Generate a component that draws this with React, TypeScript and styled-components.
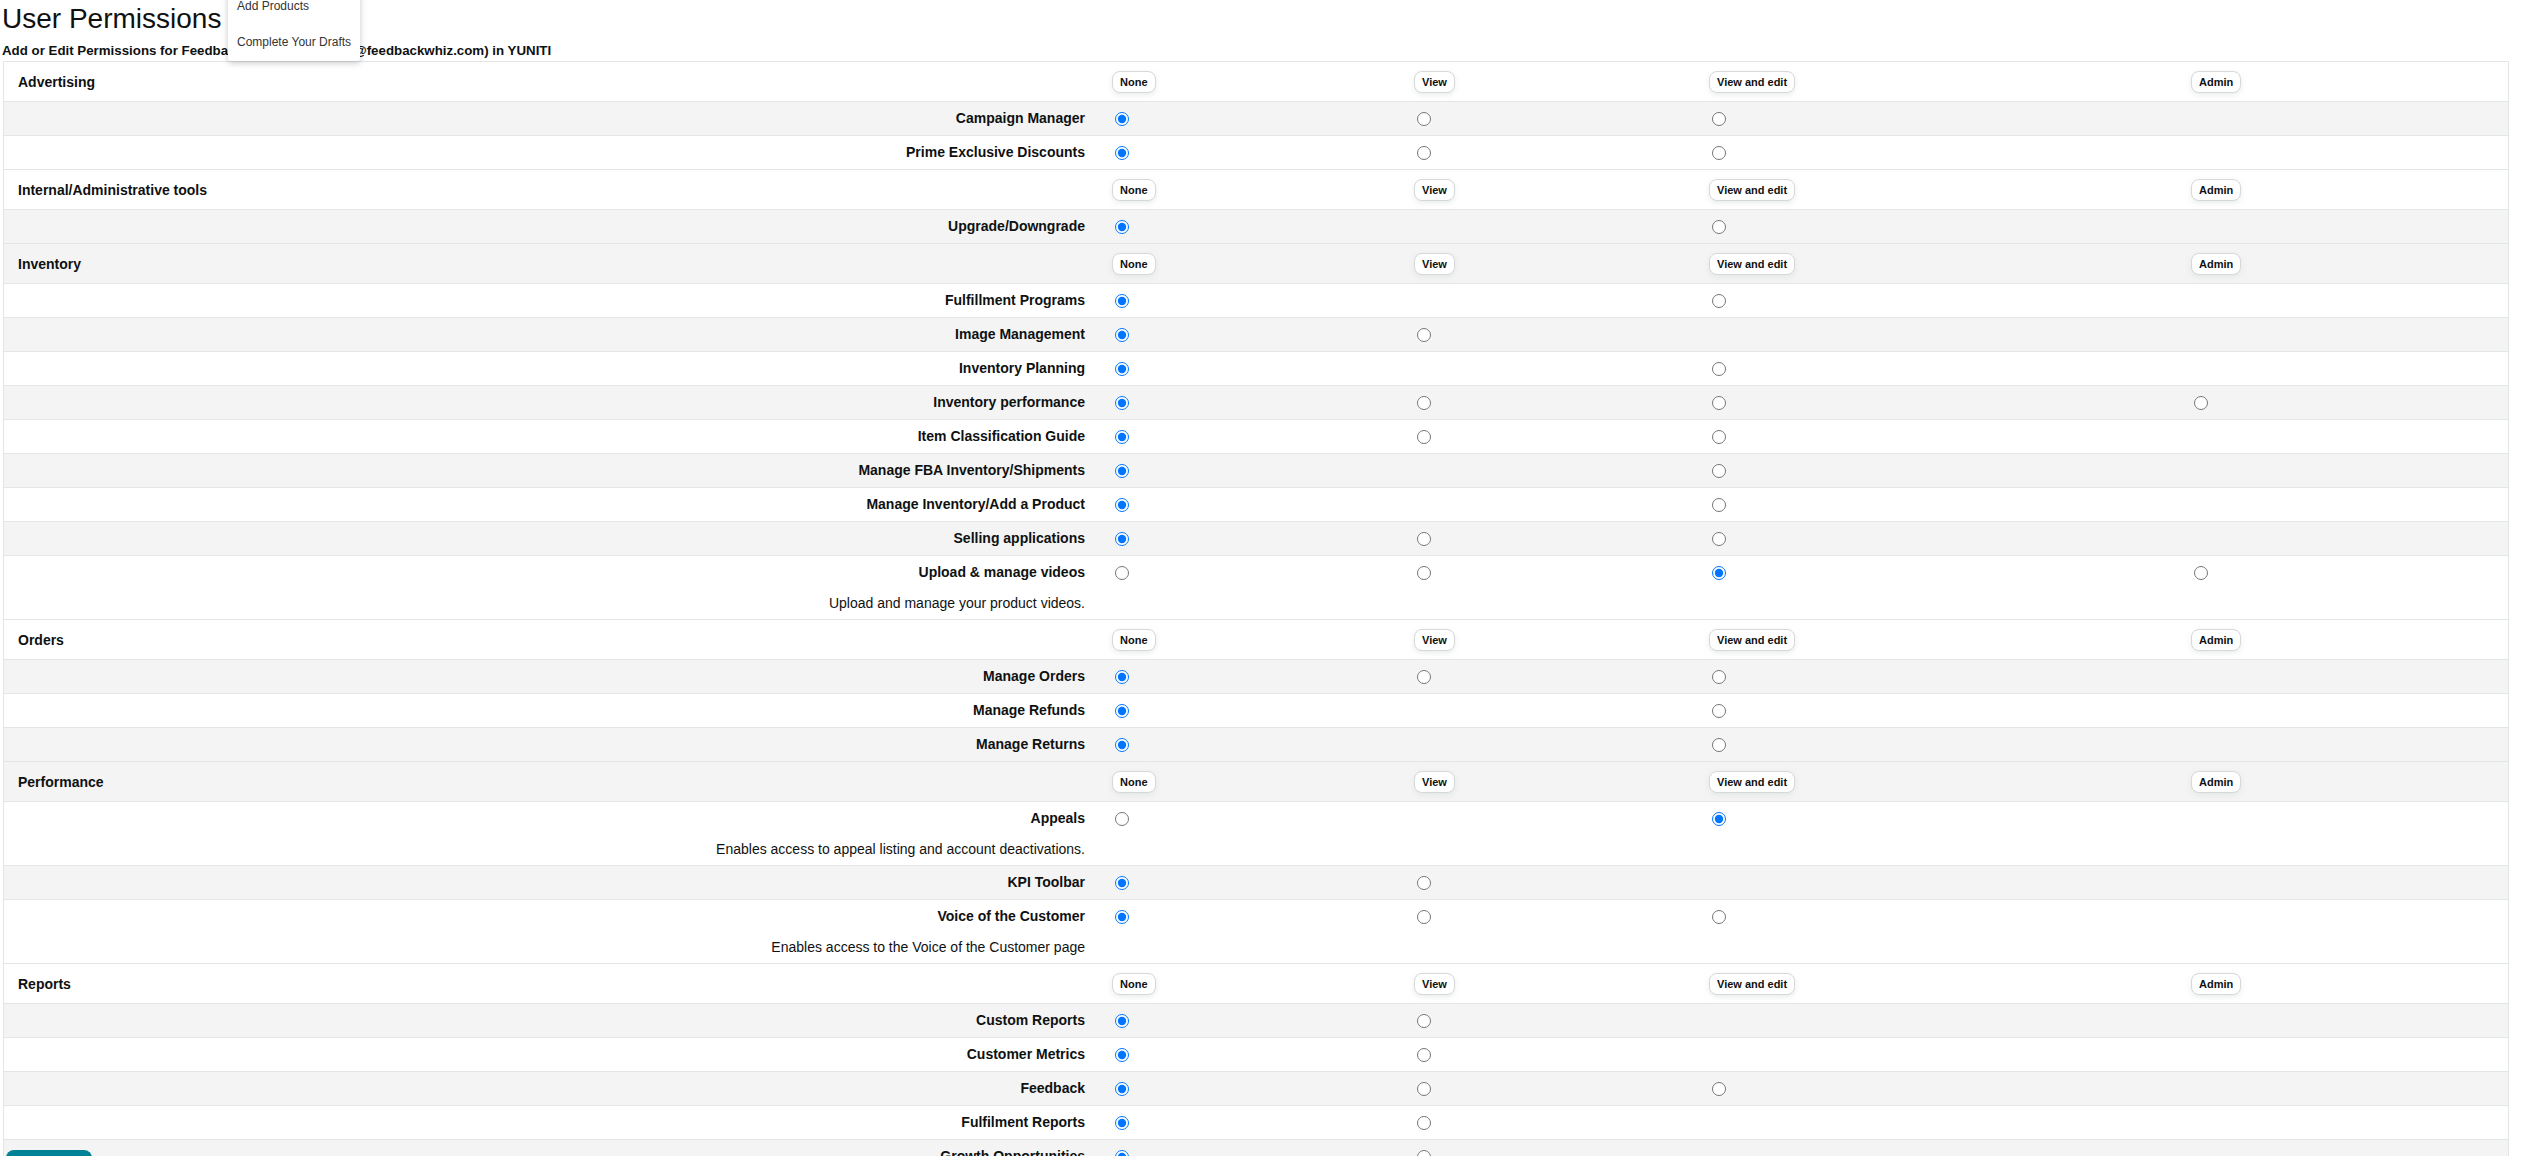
import React from "react";
import styled, { createGlobalStyle } from "styled-components";

const GlobalStyle = createGlobalStyle`
  html, body {
    margin: 0;
    padding: 0;
    overflow: hidden;
    background: #ffffff;
  }
  body {
    font-family: "Liberation Sans", Arial, sans-serif;
    color: #0f1111;
  }
`;

type Level = "none" | "view" | "edit" | "admin";
type Perm = { label: string; options: Level[]; checked: Level; desc?: string };
type Section = { title: string; perms: Perm[] };

const LEVELS: Level[] = ["none", "view", "edit", "admin"];
const LEVEL_LABELS: Record<Level, string> = {
  none: "None",
  view: "View",
  edit: "View and edit",
  admin: "Admin",
};

const NVE: Level[] = ["none", "view", "edit"];
const NE: Level[] = ["none", "edit"];
const NV: Level[] = ["none", "view"];
const ALL: Level[] = ["none", "view", "edit", "admin"];

const sections: Section[] = [
  {
    title: "Advertising",
    perms: [
      { label: "Campaign Manager", options: NVE, checked: "none" },
      { label: "Prime Exclusive Discounts", options: NVE, checked: "none" },
    ],
  },
  {
    title: "Internal/Administrative tools",
    perms: [{ label: "Upgrade/Downgrade", options: NE, checked: "none" }],
  },
  {
    title: "Inventory",
    perms: [
      { label: "Fulfillment Programs", options: NE, checked: "none" },
      { label: "Image Management", options: NV, checked: "none" },
      { label: "Inventory Planning", options: NE, checked: "none" },
      { label: "Inventory performance", options: ALL, checked: "none" },
      { label: "Item Classification Guide", options: NVE, checked: "none" },
      { label: "Manage FBA Inventory/Shipments", options: NE, checked: "none" },
      { label: "Manage Inventory/Add a Product", options: NE, checked: "none" },
      { label: "Selling applications", options: NVE, checked: "none" },
      {
        label: "Upload & manage videos",
        options: ALL,
        checked: "edit",
        desc: "Upload and manage your product videos.",
      },
    ],
  },
  {
    title: "Orders",
    perms: [
      { label: "Manage Orders", options: NVE, checked: "none" },
      { label: "Manage Refunds", options: NE, checked: "none" },
      { label: "Manage Returns", options: NE, checked: "none" },
    ],
  },
  {
    title: "Performance",
    perms: [
      {
        label: "Appeals",
        options: NE,
        checked: "edit",
        desc: "Enables access to appeal listing and account deactivations.",
      },
      { label: "KPI Toolbar", options: NV, checked: "none" },
      {
        label: "Voice of the Customer",
        options: NVE,
        checked: "none",
        desc: "Enables access to the Voice of the Customer page",
      },
    ],
  },
  {
    title: "Reports",
    perms: [
      { label: "Custom Reports", options: NV, checked: "none" },
      { label: "Customer Metrics", options: NV, checked: "none" },
      { label: "Feedback", options: NVE, checked: "none" },
      { label: "Fulfilment Reports", options: NV, checked: "none" },
      { label: "Growth Opportunities", options: NV, checked: "none" },
    ],
  },
];

const Page = styled.div`
  position: relative;
  padding: 3px 0 0 2px;
  min-height: 1156px;
`;

const Title = styled.h1`
  margin: 0;
  font-size: 28px;
  line-height: 32px;
  font-weight: 400;
  color: #0f1111;
`;

const Subtitle = styled.h2`
  margin: 8px 0 2px 0;
  font-size: 13.3px;
  line-height: 16px;
  font-weight: 700;
  color: #0f1111;
  white-space: nowrap;
`;

const Table = styled.div`
  margin-left: 1px;
  width: 2506px;
  box-sizing: border-box;
  border: 1px solid #e3e6e6;
  border-bottom: none;
`;

const Row = styled.div<{ $shaded: boolean }>`
  display: grid;
  grid-template-columns: 1096px 302px 295px 482px 1fr;
  background: ${(p) => (p.$shaded ? "#f4f4f4" : "#ffffff")};
  border-bottom: 1px solid #e3e6e6;
`;

const SectionName = styled.div`
  height: 39px;
  display: flex;
  align-items: center;
  padding-left: 14px;
  font-size: 14px;
  font-weight: 700;
`;

const HeaderCell = styled.div`
  height: 39px;
  display: flex;
  align-items: center;
  padding-left: 12px;
`;

const LevelButton = styled.button`
  height: 22px;
  padding: 0 7px;
  margin: 0;
  background: #ffffff;
  border: 1px solid #d5d9d9;
  border-radius: 8px;
  box-shadow: 0 2px 5px 0 rgba(213, 217, 217, 0.5);
  font-family: "Liberation Sans", Arial, sans-serif;
  font-size: 11px;
  font-weight: 700;
  color: #0f1111;
  cursor: pointer;
`;

const LabelCell = styled.div<{ $withDesc: boolean }>`
  display: flex;
  flex-direction: column;
  align-items: flex-end;
  padding-right: 15px;
  padding-bottom: ${(p) => (p.$withDesc ? "2px" : "0")};
`;

const PermLabel = styled.div`
  height: 33px;
  line-height: 33px;
  font-size: 14px;
  font-weight: 700;
  white-space: nowrap;
`;

const PermDesc = styled.div`
  line-height: 28px;
  font-size: 14px;
  font-weight: 400;
  white-space: nowrap;
`;

const RadioCell = styled.div`
  height: 33px;
  display: flex;
  align-items: center;
  padding-left: 15px;
`;

const Radio = styled.input`
  width: 14px;
  height: 14px;
  margin: 0;
`;

const Menu = styled.div`
  position: absolute;
  left: 228px;
  top: -12px;
  width: 132px;
  padding-bottom: 1px;
  background: #ffffff;
  box-shadow: 0 2px 6px rgba(0, 0, 0, 0.22);
  border-radius: 0 0 3px 3px;
  z-index: 10;
`;

const MenuItem = styled.div`
  height: 36px;
  line-height: 36px;
  padding-left: 9px;
  font-family: "Liberation Sans", Arial, sans-serif;
  font-size: 12px;
  color: #333333;
  white-space: nowrap;
`;

const SaveButton = styled.button`
  position: absolute;
  left: 6px;
  top: 1150px;
  width: 86px;
  height: 32px;
  border: none;
  border-radius: 8px;
  background: #008296;
  z-index: 5;
`;

type RowEntry =
  | { kind: "header"; title: string; shaded: boolean }
  | { kind: "perm"; perm: Perm; shaded: boolean; id: string };

function buildRows(): RowEntry[] {
  const rows: RowEntry[] = [];
  let dataIndex = 0;
  let lastShaded = false;
  sections.forEach((s, si) => {
    rows.push({ kind: "header", title: s.title, shaded: lastShaded });
    s.perms.forEach((p, pi) => {
      dataIndex += 1;
      const shaded = dataIndex % 2 === 1;
      lastShaded = shaded;
      rows.push({ kind: "perm", perm: p, shaded, id: `perm-${si}-${pi}` });
    });
  });
  return rows;
}

export default function App() {
  const rows = buildRows();
  return (
    <>
      <GlobalStyle />
      <Page>
        <Title>User Permissions</Title>
        <Subtitle>
          Add or Edit Permissions for FeedbackWhiz (amazonacc@feedbackwhiz.com) in YUNITI
        </Subtitle>
        <Table>
          {rows.map((r, i) =>
            r.kind === "header" ? (
              <Row key={i} $shaded={r.shaded}>
                <SectionName>{r.title}</SectionName>
                {LEVELS.map((l) => (
                  <HeaderCell key={l}>
                    <LevelButton type="button">{LEVEL_LABELS[l]}</LevelButton>
                  </HeaderCell>
                ))}
              </Row>
            ) : (
              <Row key={i} $shaded={r.shaded}>
                <LabelCell $withDesc={!!r.perm.desc}>
                  <PermLabel>{r.perm.label}</PermLabel>
                  {r.perm.desc && <PermDesc>{r.perm.desc}</PermDesc>}
                </LabelCell>
                {LEVELS.map((l) => (
                  <RadioCell key={l}>
                    {r.perm.options.includes(l) && (
                      <Radio
                        type="radio"
                        name={r.id}
                        value={l}
                        defaultChecked={r.perm.checked === l}
                      />
                    )}
                  </RadioCell>
                ))}
              </Row>
            )
          )}
        </Table>
        <Menu>
          <MenuItem>Add Products</MenuItem>
          <MenuItem>Complete Your Drafts</MenuItem>
        </Menu>
        <SaveButton type="button" aria-label="Save" />
      </Page>
    </>
  );
}
